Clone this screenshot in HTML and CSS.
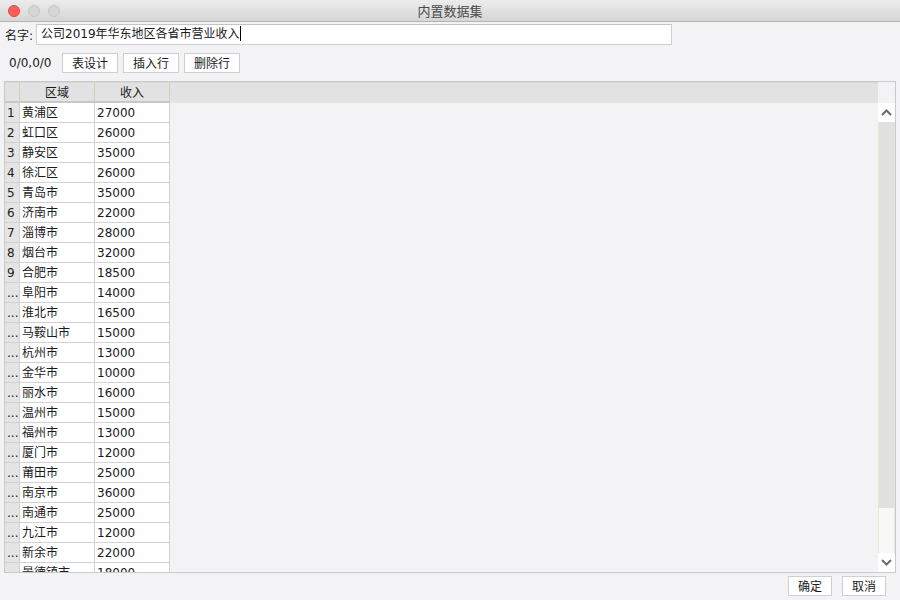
FILE: index.html
```html
<!DOCTYPE html>
<html lang="zh-CN">
<head>
  <meta charset="UTF-8" />
  <title>内置数据集</title>
  <link rel="stylesheet" href="styles.css">
</head>
<body>
  <div class="window">
    <div class="titlebar">
      <div class="lights">
        <span class="light close"></span>
        <span class="light"></span>
        <span class="light"></span>
      </div>
      <div class="title">内置数据集</div>
    </div>

    <div class="name-row">
      <label>名字:</label>
      <div class="input">公司2019年华东地区各省市营业收入<span class="caret"></span></div>
    </div>

    <div class="tools">
      <span class="pos">0/0,0/0</span>
      <button class="btn tool">表设计</button>
      <button class="btn tool">插入行</button>
      <button class="btn tool">删除行</button>
    </div>

    <div class="grid">
      <div class="viewport">
        <div class="head">
          <div class="hcell rh"></div>
          <div class="hcell">区域</div>
          <div class="hcell">收入</div>
        </div>
        <div class="rows" id="rows"></div>
      </div>
      <div class="vscroll">
        <div class="corner"></div>
        <div class="arrow up">
          <svg width="11" height="7" viewBox="0 0 11 7"><path d="M1 6 L5.5 1.5 L10 6" fill="none" stroke="#6b6b6b" stroke-width="2"/></svg>
        </div>
        <div class="track">
          <div class="thumb"></div>
        </div>
        <div class="arrow down">
          <svg width="11" height="7" viewBox="0 0 11 7"><path d="M1 1 L5.5 5.5 L10 1" fill="none" stroke="#6b6b6b" stroke-width="2"/></svg>
        </div>
      </div>
    </div>

    <div class="footer">
      <button class="btn">确定</button>
      <button class="btn">取消</button>
    </div>
  </div>

  <script>
    const data = [
      ['黄浦区', 27000], ['虹口区', 26000], ['静安区', 35000], ['徐汇区', 26000],
      ['青岛市', 35000], ['济南市', 22000], ['淄博市', 28000], ['烟台市', 32000],
      ['合肥市', 18500], ['阜阳市', 14000], ['淮北市', 16500], ['马鞍山市', 15000],
      ['杭州市', 13000], ['金华市', 10000], ['丽水市', 16000], ['温州市', 15000],
      ['福州市', 13000], ['厦门市', 12000], ['莆田市', 25000], ['南京市', 36000],
      ['南通市', 25000], ['九江市', 12000], ['新余市', 22000], ['景德镇市', 18000]
    ];

    const rows = document.getElementById('rows');
    data.forEach((d, i) => {
      const row = document.createElement('div');
      row.className = 'row';
      row.innerHTML =
        '<div class="cell rh">' + (i < 9 ? i + 1 : '...') + '</div>' +
        '<div class="cell">' + d[0] + '</div>' +
        '<div class="cell">' + d[1] + '</div>';
      rows.appendChild(row);
    });
  </script>
</body>
</html>
```

FILE: styles.css
```css
* {
  box-sizing: border-box;
}

body {
  margin: 0;
  width: 900px;
  height: 600px;
  overflow: hidden;
  background: #f3f3f5;
  font-family: "DejaVu Sans", "Noto Sans CJK SC", sans-serif;
  color: #1a1a1a;
}

.window {
  display: flex;
  flex-direction: column;
  height: 600px;
}

.titlebar {
  height: 22px;
  display: flex;
  align-items: center;
  background: linear-gradient(#ececec, #d6d6d6);
  border-bottom: 1px solid #b4b4b4;
  position: relative;
  flex-shrink: 0;
}

.lights {
  display: flex;
  gap: 8px;
  padding-left: 8px;
}

.light {
  width: 12px;
  height: 12px;
  border-radius: 50%;
  background: #d6d6d6;
  border: 1px solid #c4c4c4;
}

.light.close {
  background: #fc5f57;
  border-color: #df4744;
}

.title {
  position: absolute;
  left: 0;
  right: 0;
  text-align: center;
  font-size: 13px;
  color: #4a4a4a;
  font-family: "Noto Sans CJK SC", sans-serif;
}

.name-row {
  display: flex;
  align-items: center;
  height: 22px;
  margin-top: 1px;
  padding-left: 5px;
  font-size: 12px;
}

.name-row label {
  width: 31px;
}

.input {
  width: 636px;
  height: 21px;
  background: #fff;
  border: 1px solid #d0d0d4;
  border-top-color: #c4c4c8;
  padding-left: 4px;
  line-height: 19px;
  white-space: nowrap;
}

.caret {
  display: inline-block;
  width: 1px;
  height: 15px;
  background: #000;
  vertical-align: -3px;
}

.tools {
  display: flex;
  align-items: center;
  gap: 5px;
  height: 20px;
  margin-top: 8px;
  padding-left: 9px;
  font-size: 12px;
}

.pos {
  width: 48px;
}

.btn {
  font-family: "Noto Sans CJK SC", sans-serif;
  font-size: 12px;
  height: 20px;
  padding: 0;
  background: #fff;
  border: 1px solid #cfcfd2;
  border-radius: 0;
  color: #1a1a1a;
  line-height: 18px;
  width: 44px;
}

.btn.tool {
  width: 56px;
}

.grid {
  display: flex;
  margin: 8px 0 0 4px;
  width: 892px;
  height: 492px;
  border: 1px solid #c9c9cc;
  flex-shrink: 0;
}

.viewport {
  flex: 1;
  overflow: hidden;
  font-size: 12px;
}

.head {
  display: grid;
  grid-template-columns: 15px 75px 75px;
  height: 21px;
  background: #e2e2e2;
  border-top: 1px solid #d8d8d8;
}

.hcell {
  text-align: center;
  line-height: 18px;
  font-family: "Noto Sans CJK SC", sans-serif;
  border-right: 1px solid #d6cfb4;
  border-bottom: 2px solid #c8c8c8;
}

.rows {
  width: 165px;
}

.row {
  display: grid;
  grid-template-columns: 15px 75px 75px;
  height: 20px;
}

.cell {
  background: #fff;
  border-right: 1px solid #d2d2d2;
  border-bottom: 1px solid #d2d2d2;
  padding: 2px 0 0 2px;
  line-height: 17px;
  white-space: nowrap;
  overflow: hidden;
}

.cell.rh {
  background: #e4e4e4;
  color: #222;
}

.vscroll {
  width: 17px;
  display: flex;
  flex-direction: column;
}

.corner {
  height: 21px;
  background: #f3f3f5;
}

.arrow {
  height: 19px;
  background: #fff;
  display: flex;
  align-items: center;
  justify-content: center;
}

.track {
  flex: 1;
  background: #f8f8f6;
  border-left: 1px solid #ece6d4;
  border-right: 1px solid #ece6d4;
}

.thumb {
  height: 386px;
  background: #e1e1e1;
}

.footer {
  display: flex;
  justify-content: flex-end;
  gap: 10px;
  padding-right: 14px;
  margin-top: 3px;
}
```
